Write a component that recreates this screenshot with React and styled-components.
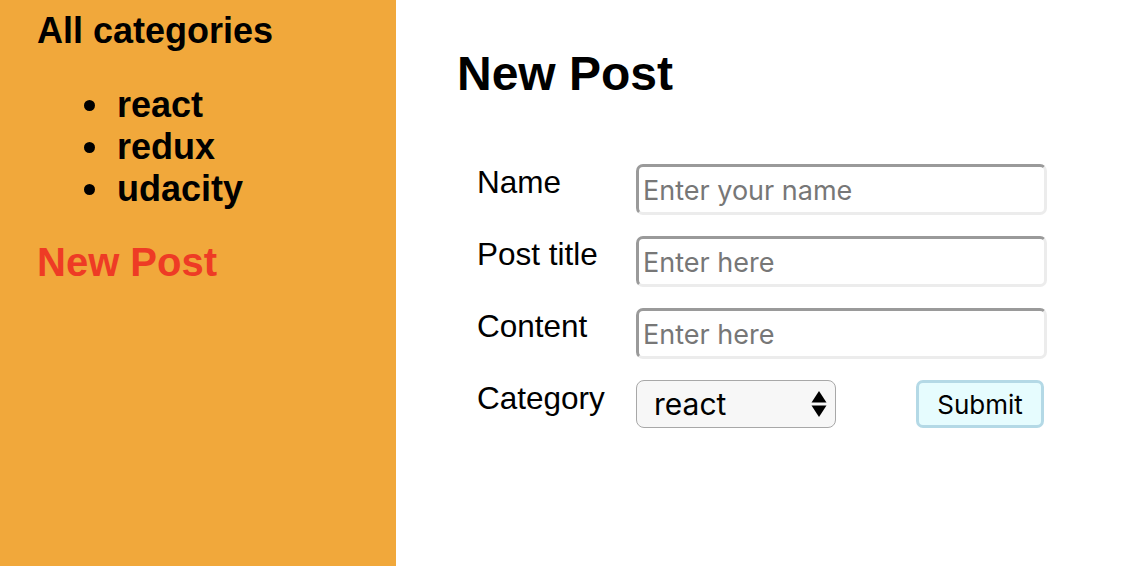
import React from "react";
import styled, { createGlobalStyle } from "styled-components";

const Global = createGlobalStyle`
  html, body { margin: 0; padding: 0; height: 100%; background: #ffffff; }
  body { font-family: "Liberation Sans", Arial, sans-serif; color: #000; }
  #root { height: 100%; }
  * { box-sizing: border-box; }
`;

const Page = styled.div`
  display: flex;
  height: 566px;
  overflow: hidden;
`;

const Sidebar = styled.aside`
  width: 396px;
  flex-shrink: 0;
  background: #f1a83b;
  padding: 10px 0 0 37px;
`;

const SideTitle = styled.h3`
  margin: 0;
  font-size: 36px;
  line-height: 42px;
  font-weight: 700;
`;

const CategoryList = styled.ul`
  margin: 32px 0 0 0;
  padding-left: 76px;
  list-style: disc;
`;

const CategoryItem = styled.li`
  padding-left: 4px;
  font-size: 36px;
  line-height: 42px;
  font-weight: 700;
`;

const SideLink = styled.a`
  display: block;
  margin-top: 29px;
  font-size: 40px;
  line-height: 46px;
  font-weight: 700;
  color: #ee3b25;
  text-decoration: none;
`;

const Main = styled.main`
  flex: 1;
  padding: 46px 0 0 61px;
`;

const Heading = styled.h1`
  margin: 0;
  font-size: 48px;
  line-height: 56px;
  font-weight: 700;
`;

const Form = styled.form`
  margin: 62px 0 0 20px;
  display: grid;
  grid-template-columns: 159px 411px;
  row-gap: 21px;
  align-items: start;
`;

const Label = styled.label`
  font-size: 31.5px;
  line-height: 36px;
  font-weight: 400;
`;

const TextInput = styled.input`
  width: 411px;
  height: 51px;
  border-style: solid;
  border-width: 3px;
  border-color: #9a9a9a #ececec #ececec #9a9a9a;
  border-radius: 7px;
  padding: 2px 4px 0 4px;
  font-family: Inter, "Liberation Sans", sans-serif;
  font-size: 27px;
  color: #000;
  background: #fff;
  outline: none;
  &::placeholder { color: #777; }
`;

const ActionRow = styled.div`
  display: flex;
  justify-content: space-between;
  align-items: center;
  padding-right: 3px;
`;

const SelectWrap = styled.div`
  position: relative;
  width: 200px;
  height: 48px;
`;

const Select = styled.select`
  appearance: none;
  -webkit-appearance: none;
  width: 100%;
  height: 100%;
  border: 1.5px solid #a8a8a8;
  border-radius: 8px;
  background: #f7f7f7;
  padding: 0 0 0 17px;
  font-family: Inter, "Liberation Sans", sans-serif;
  font-size: 30px;
  color: #000;
  outline: none;
`;

const Arrows = styled.svg`
  position: absolute;
  right: 8px;
  top: 10px;
  pointer-events: none;
`;

const SubmitButton = styled.button`
  width: 128px;
  height: 48px;
  border: 3px solid #b4d9e6;
  border-radius: 7px;
  background: #e6fcfe;
  font-family: Inter, "Liberation Sans", sans-serif;
  font-size: 26px;
  color: #000;
  padding: 0;
`;

export default function App() {
  return (
    <>
      <Global />
      <Page>
        <Sidebar>
          <SideTitle>All categories</SideTitle>
          <CategoryList>
            <CategoryItem>react</CategoryItem>
            <CategoryItem>redux</CategoryItem>
            <CategoryItem>udacity</CategoryItem>
          </CategoryList>
          <SideLink href="#">New Post</SideLink>
        </Sidebar>
        <Main>
          <Heading>New Post</Heading>
          <Form onSubmit={(e) => e.preventDefault()}>
            <Label>Name</Label>
            <TextInput placeholder="Enter your name" />
            <Label>Post title</Label>
            <TextInput placeholder="Enter here" />
            <Label>Content</Label>
            <TextInput placeholder="Enter here" />
            <Label>Category</Label>
            <ActionRow>
              <SelectWrap>
                <Select defaultValue="react">
                  <option value="react">react</option>
                  <option value="redux">redux</option>
                  <option value="udacity">udacity</option>
                </Select>
                <Arrows width="18" height="28" viewBox="0 0 18 28">
                  <path d="M9 1 L16.5 12.5 L1.5 12.5 Z" fill="#000" />
                  <path d="M9 27 L16.5 15.5 L1.5 15.5 Z" fill="#000" />
                </Arrows>
              </SelectWrap>
              <SubmitButton type="submit">Submit</SubmitButton>
            </ActionRow>
          </Form>
        </Main>
      </Page>
    </>
  );
}
